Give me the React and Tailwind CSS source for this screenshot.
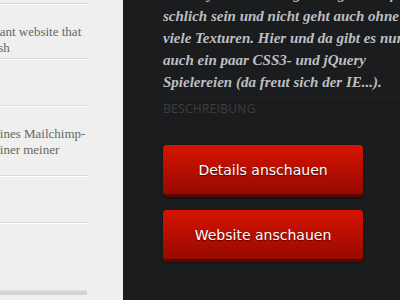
const items = [
  { h: 'h-[55px]', left: 'left-[-22px]', lines: ['elegant website that', 'polish'] },
  { h: 'h-[47px]', left: 'left-0', lines: [] },
  { h: 'h-[70px]', left: 'left-[-6px]', lines: ['eines Mailchimp-', 'einer meiner'] },
  { h: 'h-[47px]', left: 'left-0', lines: [] },
];

function RedButton({ children }) {
  return (
    <button className="w-[200px] h-[52px] rounded-[4px] bg-gradient-to-b from-[#d61300] to-[#980a00] border-b-[3px] border-[#5a0800] shadow-[0_1px_3px_rgba(0,0,0,0.5)] text-white text-[14px] font-['DejaVu_Sans',sans-serif] [text-shadow:0_1px_1px_rgba(60,0,0,0.8)] pt-[1px]">
      {children}
    </button>
  );
}

export default function App() {
  return (
    <div className="w-[400px] h-[300px] flex overflow-hidden bg-[#1b1c1e]">
      {/* Left list */}
      <aside className="w-[123px] shrink-0 bg-[#efefef] overflow-hidden flex flex-col">
        <div className="w-[88px] h-[4px] border-b border-[#d9d9d9] shadow-[0_1px_0_#fff]" />
        {items.map((it, i) => (
          <div
            key={i}
            className={`w-[88px] ${it.h} border-b border-[#d9d9d9] shadow-[0_1px_0_#fff] relative`}
          >
            <div className={`absolute ${it.left} top-[20px] font-['Liberation_Serif',serif] text-[13px] leading-[16px] text-[#666] whitespace-nowrap`}>
              {it.lines.map((l, j) => (
                <div key={j}>{l}</div>
              ))}
            </div>
          </div>
        ))}
        <div className="flex-1" />
        <div className="w-[87px] h-[5px] mb-[5px] bg-[#d3d3d3] border-t border-[#e2e2e2]" />
      </aside>

      {/* Right description */}
      <main className="flex-1 pl-[40px]">
        <div className="-mt-[17px] font-['Liberation_Serif',serif] italic font-bold text-[15px] leading-[22px] text-[#bdbfc3] whitespace-nowrap">
          <p>Das Layout sollte möglichst ganz einfach und</p>
          <p>schlich sein und nicht geht auch ohne</p>
          <p>viele Texturen. Hier und da gibt es nur</p>
          <p>auch ein paar CSS3- und jQuery</p>
          <p>Spielereien (da freut sich der IE...).</p>
        </div>
        <div className="mt-[4px] border-t border-[#232426] pt-[3px] font-['Open_Sans',sans-serif] text-[12px] leading-[16px] tracking-[0.3px] text-[#3d3e41]">
          BESCHREIBUNG
        </div>
        <div className="mt-[28px] flex flex-col gap-[13px]">
          <RedButton>Details anschauen</RedButton>
          <RedButton>Website anschauen</RedButton>
        </div>
      </main>
    </div>
  );
}
